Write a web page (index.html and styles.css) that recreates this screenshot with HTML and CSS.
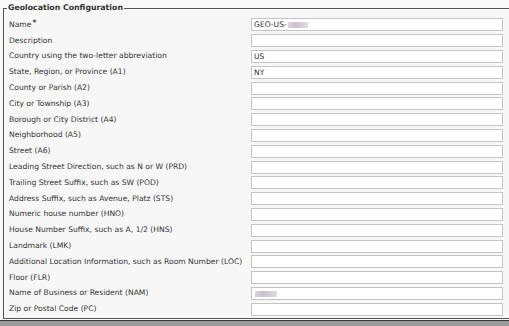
FILE: index.html
```html
<!DOCTYPE html>
<html>
<head>
<meta charset="utf-8">
<link rel="stylesheet" href="styles.css">
</head>
<body>
<div class="page">
  <fieldset class="geo">
    <legend class="geo-title">Geolocation Configuration</legend>
    <div class="grid">
      <label class="lbl">Name<span class="req">*</span></label>
      <div class="field"><input class="inp" type="text" value="GEO-US-"><span class="blur blur-name"></span></div>
      <label class="lbl">Description</label>
      <div class="field"><input class="inp" type="text" value=""></div>
      <label class="lbl">Country using the two-letter abbreviation</label>
      <div class="field"><input class="inp" type="text" value="US"></div>
      <label class="lbl">State, Region, or Province (A1)</label>
      <div class="field"><input class="inp" type="text" value="NY"></div>
      <label class="lbl">County or Parish (A2)</label>
      <div class="field"><input class="inp" type="text" value=""></div>
      <label class="lbl">City or Township (A3)</label>
      <div class="field"><input class="inp" type="text" value=""></div>
      <label class="lbl">Borough or City District (A4)</label>
      <div class="field"><input class="inp" type="text" value=""></div>
      <label class="lbl">Neighborhood (A5)</label>
      <div class="field"><input class="inp" type="text" value=""></div>
      <label class="lbl">Street (A6)</label>
      <div class="field"><input class="inp" type="text" value=""></div>
      <label class="lbl">Leading Street Direction, such as N or W (PRD)</label>
      <div class="field"><input class="inp" type="text" value=""></div>
      <label class="lbl">Trailing Street Suffix, such as SW (POD)</label>
      <div class="field"><input class="inp" type="text" value=""></div>
      <label class="lbl">Address Suffix, such as Avenue, Platz (STS)</label>
      <div class="field"><input class="inp" type="text" value=""></div>
      <label class="lbl">Numeric house number (HNO)</label>
      <div class="field"><input class="inp" type="text" value=""></div>
      <label class="lbl">House Number Suffix, such as A, 1/2 (HNS)</label>
      <div class="field"><input class="inp" type="text" value=""></div>
      <label class="lbl">Landmark (LMK)</label>
      <div class="field"><input class="inp" type="text" value=""></div>
      <label class="lbl">Additional Location Information, such as Room Number (LOC)</label>
      <div class="field"><input class="inp" type="text" value=""></div>
      <label class="lbl">Floor (FLR)</label>
      <div class="field"><input class="inp" type="text" value=""></div>
      <label class="lbl">Name of Business or Resident (NAM)</label>
      <div class="field"><input class="inp" type="text" value=""><span class="blur blur-biz"></span></div>
      <label class="lbl">Zip or Postal Code (PC)</label>
      <div class="field"><input class="inp" type="text" value=""></div>
    </div>
  </fieldset>
  <div class="footer-band"></div>
</div>
</body>
</html>
```

FILE: styles.css
```css
html, body {
  margin: 0;
  padding: 0;
  background: #f9f9f9;
  overflow: hidden;
  width: 509px;
  height: 326px;
}
.page {
  padding: 3px 0 0 3px;
  width: 506px;
  font-family: "DejaVu Sans", Verdana, sans-serif;
  color: #333;
  overflow: hidden;
}
.geo {
  margin: 0;
  padding: 4px 0 1px 4px;
  border: 1px solid #555;
  border-right: none;
  min-width: 0;
  width: 520px;
  box-sizing: border-box;
  background: #f7f7f7;
}
.geo-title {
  font-weight: bold;
  font-size: 7.8px;
  padding: 0 1px;
  margin-left: -1px;
  color: #333;
  line-height: 10px;
}
.grid {
  display: grid;
  grid-template-columns: 243px 252px;
  grid-auto-rows: 15.8px;
  align-items: center;
}
.lbl {
  font-size: 7.6px;
  line-height: 10px;
  white-space: nowrap;
  padding-left: 1px;
  color: #333;
}
.req {
  position: relative;
  top: -2px;
  font-weight: bold;
  margin-left: 1px;
}
.field {
  position: relative;
  height: 13px;
}
.inp {
  display: block;
  box-sizing: border-box;
  width: 252px;
  height: 13px;
  margin: 0;
  padding: 0 2px;
  border: 1px solid #c4c4c4;
  background: #fff;
  font-family: "DejaVu Sans", Verdana, sans-serif;
  font-size: 7.6px;
  color: #333;
  outline: none;
}
.blur {
  position: absolute;
  top: 4px;
  height: 6px;
  background: linear-gradient(90deg, #d8d8dc, #cdbfd0 35%, #d4c8d6 60%, #e0e0e2);
  filter: blur(0.6px);
}
.blur-name {
  left: 37px;
  width: 20px;
}
.blur-biz {
  left: 4px;
  width: 22px;
  top: 4px;
}
.footer-band {
  margin-top: 1px;
  margin-left: -3px;
  width: 509px;
  border-top: 1px solid #333;
  height: 10px;
  background: #9a9a9a;
}
```
